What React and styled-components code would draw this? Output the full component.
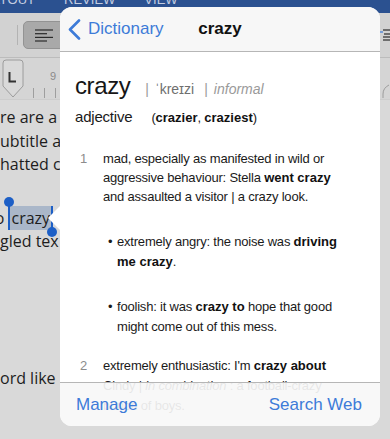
import React from 'react';
import styled, { createGlobalStyle } from 'styled-components';

const GlobalStyle = createGlobalStyle`
  html, body {
    margin: 0;
    padding: 0;
  }
  body {
    background: #d9d9d9;
    overflow: hidden;
  }
`;

const BLUE = '#3d7bd8';
const SANS = '"Liberation Sans", Arial, Helvetica, sans-serif';

const Screen = styled.div`
  position: relative;
  width: 390px;
  height: 439px;
  overflow: hidden;
  background: #d9d9d9;
  font-family: ${SANS};
`;

/* ---------- the dimmed document behind ---------- */

const Ribbon = styled.div`
  height: 13px;
  background: #2b5190;
  display: flex;
  align-items: flex-start;
  gap: 29px;
  overflow: hidden;
`;

const RibbonTab = styled.span`
  display: block;
  margin-top: -7px;
  margin-left: ${p => p.shift || 0}px;
  font-size: 13px;
  line-height: 14px;
  color: #c3cde0;
  white-space: nowrap;
`;

const Toolbar = styled.div`
  height: 45px;
  box-sizing: border-box;
  background: #d2d2d2;
  border-bottom: 1px solid #bcbcbc;
  display: flex;
  align-items: center;
`;

const Divider = styled.div`
  width: 1px;
  height: 20px;
  margin-left: 17px;
  background: #b3b3b3;
`;

const ToolButton = styled.div`
  margin-left: 5px;
  width: 46px;
  height: 28px;
  box-sizing: border-box;
  border: 1px solid #939393;
  border-radius: 5px;
  background: #a9a9a9;
  display: flex;
  align-items: center;
  padding-left: 11px;
`;

const RightTools = styled.div`
  margin-left: auto;
  width: 10px;
  display: flex;
  align-items: center;
  overflow: hidden;
`;

const Ruler = styled.div`
  height: 42px;
  background: #d5d5d5;
  display: flex;
  align-items: flex-start;
  border-bottom: 1px solid #cdcdcd;
  box-sizing: border-box;
`;

const DocBody = styled.div`
  padding-top: 6px;
  font-family: "Open Sans", "Liberation Sans", sans-serif;
  font-size: 16px;
  line-height: 23.5px;
  color: #1d1d1d;
`;

const DocLine = styled.div`
  margin-top: ${p => p.gap || 0}px;
  margin-left: ${p => -(p.shift || 0)}px;
  white-space: nowrap;
`;

const Sel = styled.span`
  position: relative;
  display: inline-block;
  line-height: 24px;
  padding: 0 1px 0 1px;
  background: #aab7c9;
  border-left: 2px solid #1d5fc6;
  border-right: 2px solid #1d5fc6;

  &::before,
  &::after {
    content: '';
    position: absolute;
    width: 10px;
    height: 10px;
    border-radius: 50%;
    background: #1d5fc6;
  }
  &::before {
    left: -6px;
    top: -9px;
  }
  &::after {
    right: -6px;
    bottom: -7px;
  }
`;

/* ---------- the dictionary popover ---------- */

const Popover = styled.div`
  position: absolute;
  left: 60px;
  top: 7px;
  width: 320px;
  height: 419px;

  &::before {
    content: '';
    position: absolute;
    left: -12px;
    top: 199px;
    border-top: 12px solid transparent;
    border-bottom: 12px solid transparent;
    border-right: 12px solid #ffffff;
  }
`;

const Sheet = styled.div`
  position: relative;
  height: 100%;
  border-radius: 12px;
  overflow: hidden;
  background: #ffffff;
  display: flex;
  flex-direction: column;
`;

const Header = styled.div`
  flex: none;
  height: 45px;
  box-sizing: border-box;
  background: #f7f7f7;
  border-bottom: 1px solid #b6b6b6;
  display: grid;
  grid-template-columns: 1fr auto 1fr;
  align-items: center;
  font-size: 17px;
`;

const Back = styled.div`
  display: flex;
  align-items: center;
  gap: 7px;
  padding-left: 8px;
  color: ${BLUE};
`;

const Title = styled.div`
  font-weight: bold;
  color: #111;
`;

const Body = styled.div`
  flex: 1;
  overflow: hidden;
  padding: 20px 12px 0 15px;
  color: #1a1a1a;
  font-size: 13px;
  letter-spacing: -0.2px;

  b {
    letter-spacing: 0;
    color: #111;
  }
`;

const HeadRow = styled.div`
  display: flex;
  align-items: baseline;
  height: 28px;
  line-height: 28px;
  white-space: nowrap;
  letter-spacing: 0;
`;

const Headword = styled.span`
  font-size: 24px;
  letter-spacing: -0.4px;
  color: #161616;
`;

const Pron = styled.span`
  margin-left: 15px;
  font-size: 14px;
  color: #6f6f6f;
`;

const Bar = styled.span`
  color: #9a9a9a;
  margin: 0 6px 0 0;
  & + & {
    margin-left: 10px;
  }
`;

const Register = styled.span`
  font-style: italic;
  color: #9a9a9a;
`;

const WordClass = styled.div`
  margin-top: 7px;
  display: flex;
  align-items: baseline;
  gap: 19px;
  line-height: 20px;
  font-size: 15px;
`;

const Inflections = styled.span`
  font-size: 13px;
`;

const Sense = styled.div`
  margin-top: ${p => p.gap}px;
  display: grid;
  grid-template-columns: 23px 1fr;
  padding-left: 5px;
  line-height: ${p => p.lh || 19}px;
`;

const SenseNum = styled.span`
  color: #8c8c8c;
`;

const SubSense = styled.div`
  margin-top: ${p => p.gap}px;
  margin-left: 33px;
  display: grid;
  grid-template-columns: 9px 1fr;
  line-height: 20px;
`;

const Dot = styled.span`
  font-size: 13px;
`;

const Footer = styled.div`
  position: absolute;
  left: 0;
  right: 0;
  bottom: 0;
  height: 44px;
  box-sizing: border-box;
  border-top: 1px solid #b6b6b6;
  background: rgba(247, 247, 247, 0.92);
  display: flex;
  justify-content: space-between;
  align-items: center;
  padding: 0 18px 0 16px;
  font-size: 17px;
  color: ${BLUE};
`;

const AlignLeftIcon = () => (
  <svg width="18" height="13" viewBox="0 0 18 13">
    <g stroke="#2a2a2a" strokeWidth="1.2">
      <line x1="0" y1="1" x2="18" y2="1" />
      <line x1="0" y1="4.7" x2="12" y2="4.7" />
      <line x1="0" y1="8.4" x2="18" y2="8.4" />
      <line x1="0" y1="12" x2="12" y2="12" />
    </g>
  </svg>
);

const ListIcon = () => (
  <svg width="10" height="12" viewBox="0 0 10 12">
    <line x1="0" y1="3" x2="3" y2="3" stroke="#3d7bd8" strokeWidth="1.2" />
    <g stroke="#2a2a2a" strokeWidth="1.2">
      <line x1="3" y1="1" x2="10" y2="1" />
      <line x1="4" y1="5" x2="10" y2="5" />
      <line x1="3" y1="8" x2="10" y2="8" />
      <line x1="3" y1="11" x2="10" y2="11" />
    </g>
  </svg>
);

const RulerMarks = () => (
  <svg width="390" height="41" viewBox="0 0 390 41">
    <path
      d="M3 5 Q3 2 6 2 L20 2 Q23 2 23 5 L23 28 L13 39 L3 28 Z"
      fill="#d9d9d9"
      stroke="#9c9c9c"
      strokeWidth="1"
    />
    <path d="M9.5 14 L9.5 23.5 L16 23.5" fill="none" stroke="#333" strokeWidth="2" />
    <g stroke="#9e9e9e" strokeWidth="1">
      <line x1="33.5" y1="30" x2="33.5" y2="40" />
      <line x1="44.5" y1="30" x2="44.5" y2="40" />
      <line x1="55.5" y1="30" x2="55.5" y2="40" />
    </g>
    <text x="50" y="22" fontSize="11" fill="#8a8a8a" fontFamily="Liberation Sans, Arial, sans-serif">9</text>
    <path d="M389 27 Q383 30 383 36 L383 40" fill="none" stroke="#9c9c9c" strokeWidth="1" />
  </svg>
);

const Chevron = () => (
  <svg width="13" height="21" viewBox="0 0 13 21">
    <path d="M11 1.5 L2 10.5 L11 19.5" fill="none" stroke={BLUE} strokeWidth="2.6" strokeLinecap="round" strokeLinejoin="round" />
  </svg>
);

export default function App() {
  return (
    <Screen>
      <GlobalStyle />

      <Ribbon>
        <RibbonTab shift={-16}>LAYOUT</RibbonTab>
        <RibbonTab>REVIEW</RibbonTab>
        <RibbonTab>VIEW</RibbonTab>
      </Ribbon>

      <Toolbar>
        <Divider />
        <ToolButton>
          <AlignLeftIcon />
        </ToolButton>
        <RightTools>
          <ListIcon />
        </RightTools>
      </Toolbar>

      <Ruler>
        <RulerMarks />
      </Ruler>

      <DocBody>
        <DocLine>re are a</DocLine>
        <DocLine>ubtitle a</DocLine>
        <DocLine>hatted c</DocLine>
        <DocLine gap={29} shift={11}>to <Sel>crazy</Sel></DocLine>
        <DocLine>gled tex</DocLine>
        <DocLine gap={113}>ord like</DocLine>
      </DocBody>

      <Popover>
        <Sheet>
          <Header>
            <Back>
              <Chevron />
              <span>Dictionary</span>
            </Back>
            <Title>crazy</Title>
            <div />
          </Header>

          <Body>
            <HeadRow>
              <Headword>crazy</Headword>
              <Pron>
                <Bar>|</Bar>ˈkreɪzi<Bar>|</Bar>
                <Register>informal</Register>
              </Pron>
            </HeadRow>

            <WordClass>
              <span>adjective</span>
              <Inflections>
                (<b>crazier</b>, <b>craziest</b>)
              </Inflections>
            </WordClass>

            <Sense gap={21}>
              <SenseNum>1</SenseNum>
              <span>
                mad, especially as manifested in wild or<br />
                aggressive behaviour: Stella <b>went crazy</b><br />
                and assaulted a visitor | a crazy look.
              </span>
            </Sense>

            <SubSense gap={26}>
              <Dot>•</Dot>
              <span>
                extremely angry: the noise was <b>driving</b><br />
                <b>me crazy</b>.
              </span>
            </SubSense>

            <SubSense gap={25}>
              <Dot>•</Dot>
              <span>
                foolish: it was <b>crazy to</b> hope that good<br />
                might come out of this mess.
              </span>
            </SubSense>

            <Sense gap={19} lh={20}>
              <SenseNum>2</SenseNum>
              <span>
                extremely enthusiastic: I'm <b>crazy about</b><br />
                Cindy | <i>in combination</i> : a football-crazy<br />
                bunch of boys.
              </span>
            </Sense>
          </Body>

          <Footer>
            <span>Manage</span>
            <span>Search Web</span>
          </Footer>
        </Sheet>
      </Popover>
    </Screen>
  );
}
